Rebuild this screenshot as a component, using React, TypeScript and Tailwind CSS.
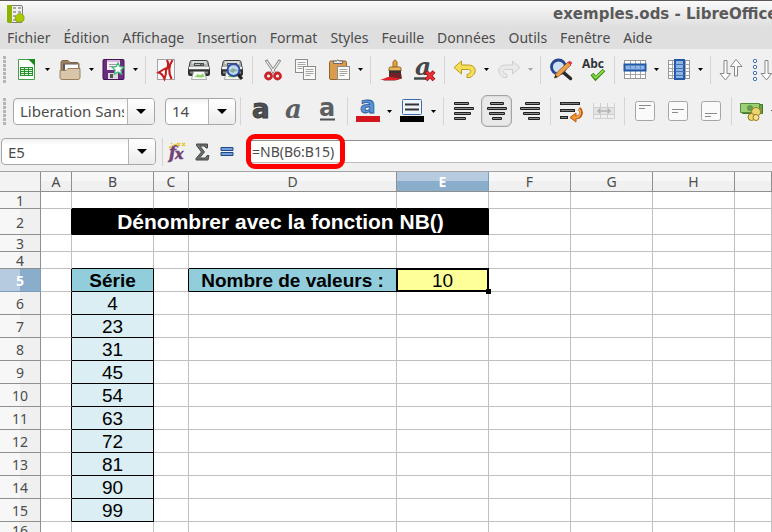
import React from "react";

type Children = { children: React.ReactNode };

function Icon({ children }: Children) {
  return (
    <svg viewBox="0 0 24 24" className="h-6 w-6 shrink-0" aria-hidden="true">
      {children}
    </svg>
  );
}

function Tool({ label, pressed = false, children }: Children & { label: string; pressed?: boolean }) {
  return (
    <button
      type="button"
      aria-label={label}
      title={label}
      aria-pressed={pressed}
      className={
        pressed
          ? "mx-px flex h-8 w-[31px] shrink-0 items-center justify-center rounded-md border border-[#a3a3a3] bg-[#e9e9e9] shadow-[inset_0_0_2px_#bbb]"
          : "flex h-8 w-[33px] shrink-0 items-center justify-center"
      }
    >
      <Icon>{children}</Icon>
    </button>
  );
}

function Drop({ label, faded = false }: { label: string; faded?: boolean }) {
  return (
    <button type="button" aria-label={label} className="flex h-8 w-[11px] shrink-0 items-center justify-center">
      <svg viewBox="0 0 5 3" className="h-[3px] w-[5px]" aria-hidden="true">
        <path d="M0 0h5L2.5 3z" fill={faded ? "#a5a5a5" : "#000"} />
      </svg>
    </button>
  );
}

function Sep() {
  return (
    <div className="flex w-2 shrink-0 justify-center">
      <div className="h-7 w-px bg-[#d4d4d4]" />
    </div>
  );
}

function Grip() {
  return (
    <div className="flex w-[9px] shrink-0 flex-col items-start gap-px pl-[3px]">
      {[0, 1, 2, 3, 4, 5, 6].map((n) => (
        <div key={n} className="h-[3px] w-[3px] bg-[#b5b5b5]" />
      ))}
    </div>
  );
}

function Combo({ label, value, className }: { label: string; value: string; className: string }) {
  return (
    <label className={"relative block h-[27px] shrink-0 " + className}>
      <span className="sr-only">{label}</span>
      <select className="block h-full w-full appearance-none overflow-hidden rounded-[4px] border border-[#a6a6a6] bg-white bg-linear-to-b from-[#f1f1f1] to-white to-25% pr-[30px] pl-[6px] text-[15px] leading-5 text-[#4c4c4c]">
        <option>{value}</option>
      </select>
      <span className="pointer-events-none absolute inset-y-px right-px flex w-[27px] items-center justify-center rounded-r-[3px] border-l border-[#b5b5b5] bg-linear-to-b from-white to-[#ececec]">
        <svg viewBox="0 0 10 5" className="h-[5px] w-[10px]" aria-hidden="true">
          <path d="M0 0h10L5 5z" fill="#000" />
        </svg>
      </span>
    </label>
  );
}

const glyph = { fontFamily: "DejaVu Serif, serif", fontWeight: 700 } as const;
const slab = { fontFamily: "DejaVu Sans, sans-serif", fontWeight: 700 } as const;

const Sheet = ({ x, y }: { x: number; y: number }) => (
  <g transform={`translate(${x} ${y})`}>
    <rect x=".5" y=".5" width="12" height="13" fill="#fafaf8" stroke="#8b8d88" />
    <path d="M2.5 3.5h8M2.5 5.5h8M2.5 7.5h8M2.5 9.5h5" stroke="#a6a8a4" />
  </g>
);

const Printer = () => (
  <g>
    <path d="M4.500 2.500h15q1 0 1.300 1l1.700 8H1.500l1.700-8q.3-1 1.300-1z" fill="#aeb1ae" stroke="#3a3d40" />
    <path d="M5 3h14l.6 3H4.400z" fill="#d9dbd8" />
    <path d="M7 5h10v3H7z" fill="#4b4e50" />
    <path d="M8 6.500h5M14.500 6.500h1" stroke="#b9bcb9" />
    <path d="M2 9h20v2.500H2z" fill="#f2f3f1" />
    <path d="M1 11.500h22v4.500q0 2-2 2H3q-2 0-2-2z" fill="#2d3134" />
    <path d="M3 14.500h3M18 14.500h3" stroke="#85898a" strokeWidth="2" />
    <path d="M6.500 13.500h11l2 8h-15z" fill="#f7f9f5" stroke="#8c8e8a" strokeWidth=".7" />
    <path d="M7.500 19l3.500-3 2 1.500 3-2 1.500 3-3 1z" fill="#8bcf6a" />
  </g>
);

const AlignLines = ({ rows }: { rows: number[][] }) => (
  <g>
    {rows.map(([x, w], i) => (
      <g key={i}>
        <rect x={x} y={3 + i * 5} width={w} height="3" rx="1" fill="#1d1f20" />
        <rect x={x + 1} y={4 + i * 5} width={w - 2} height="1" fill="#8c8c8c" />
      </g>
    ))}
  </g>
);

const VBox = ({ y }: { y: number }) => (
  <g>
    <rect x="2.500" y="2.500" width="19" height="19" rx="2" fill="#fafafa" stroke="#a5a5a5" />
    <path d={`M6 ${y}.500h12M6 ${y + 3}.500h6`} stroke="#8a8a8a" />
  </g>
);

const MenuItems = ["Fichier", "Édition", "Affichage", "Insertion", "Format", "Styles", "Feuille", "Données", "Outils", "Fenêtre", "Aide"];

function StandardBar() {
  return (
    <div className="flex h-[41px] shrink-0 items-center overflow-hidden" role="toolbar" aria-label="Standard">
      <Grip />
      <Tool label="Nouveau">
        <path d="M4.500 1.500h11l5 5v15h-16z" fill="#fff" stroke="#43a047" />
        <path d="M14 1h7v7z" fill="#188a1c" />
        <path d="M6 9h13v9H6z" fill="#26902a" />
        <path d="M7 10.500h3M11 10.500h3M15 10.500h3M7 12.500h3M11 12.500h3M15 12.500h3M7 14.500h3M11 14.500h3M15 14.500h3M7 16.500h3M11 16.500h3M15 16.500h3" stroke="#e9f7e6" />
      </Tool>
      <Drop label="Modèles" />
      <Tool label="Ouvrir">
        <path d="M3 4.500q0-2 2-2h5l2 2h7q2 0 2 2v13H3z" fill="#a08261" stroke="#806447" />
        <path d="M5 5.500h14v8H5z" fill="#5c5c58" />
        <path d="M7 6.500h13v6H7z" fill="#fff" />
        <path d="M2 12.500h6l2-2h12v9q0 2-2 2H4q-2 0-2-2z" fill="#d9c6aa" stroke="#9b7e5c" />
      </Tool>
      <Drop label="Documents récents" />
      <Tool label="Enregistrer">
        <rect x="1" y="1.500" width="21" height="20" rx="1" fill="#6a2c7c" stroke="#421352" />
        <path d="M5 2h13v10H5z" fill="#f5eef6" />
        <path d="M5 2h13v2H5z" fill="#d9b6de" />
        <path d="M7 6.500h9M7 8.500h7" stroke="#9d9d9d" />
        <path d="M6 15h10v6H6z" fill="#dadada" />
        <path d="M8 16h3v4H8z" fill="#555" />
        <path d="M16 5l1.800 3.600 4 .6-2.900 2.800.7 4-3.600-1.900-3.600 1.900.7-4-2.900-2.800 4-.6z" fill="#fff" stroke="#42b77b" strokeWidth="1.300" />
      </Tool>
      <Drop label="Options d'enregistrement" />
      <Sep />
      <Tool label="Exporter au format PDF">
        <rect x="3.500" y="1.500" width="17" height="20" fill="#f8f8f8" stroke="#a3a3a3" />
        <path d="M13 2c1.500 3 1.500 7-1 10M18.500 2c-4 6-4 13-1 19" fill="none" stroke="#c31c1f" strokeWidth="2.200" />
        <path d="M12 10L4.500 14.500q4 1 6 6.500 2-5 1.500-11" fill="none" stroke="#c31c1f" strokeWidth="2" />
      </Tool>
      <Tool label="Imprimer"><Printer /></Tool>
      <Tool label="Aperçu">
        <Printer />
        <circle cx="13.500" cy="12" r="6" fill="#b6d2f1" fillOpacity=".85" stroke="#2f4e9e" strokeWidth="2" />
        <path d="M10 13l3-3 3 2-3 3z" fill="#87a98e" />
        <path d="M18 16.500l4 4.500" stroke="#202020" strokeWidth="3" />
      </Tool>
      <Sep />
      <Tool label="Couper">
        <path d="M5 2l9.500 14M19 2L9.500 16" stroke="#858783" strokeWidth="3" />
        <path d="M5.500 3l8.500 12M18.500 3L10 15" stroke="#f5f5f3" strokeWidth="1.200" />
        <circle cx="7.500" cy="18" r="3" fill="none" stroke="#c8242b" strokeWidth="2.800" />
        <circle cx="16.500" cy="18" r="3" fill="none" stroke="#c8242b" strokeWidth="2.800" />
      </Tool>
      <Tool label="Copier">
        <Sheet x={1} y={1} />
        <Sheet x={9} y={8} />
      </Tool>
      <Tool label="Coller">
        <rect x="2.500" y="3" width="17" height="18.500" rx="1.500" fill="#d99c4c" stroke="#92652a" />
        <path d="M6.500 5.500V3h3q1-2 3 0h3v2.500z" fill="#eee" stroke="#6b6b6b" />
        <Sheet x={10} y={8} />
      </Tool>
      <Drop label="Collage spécial" />
      <Sep />
      <Tool label="Cloner le formatage">
        <path d="M14 9V4q2-4 4 0v5z" fill="#e6a240" stroke="#9e6a1c" />
        <path d="M11 9h10q1 0 1 2v2H10v-2q0-2 1-2z" fill="#e8b45c" stroke="#9a6b24" />
        <path d="M10 12.500h12v2.500H10z" fill="#333" />
        <path d="M10 15h12l1 5.500-7 2H4q5-2 6-3z" fill="#702226" />
        <path d="M1 22c5-1 5-3 10-3s6 2 11 1l-4 2z" fill="#df2029" />
      </Tool>
      <Tool label="Effacer le formatage">
        <text x="3" y="17" fontSize="25" fontStyle="italic" fill="#45484a" style={glyph}>a</text>
        <path d="M2 20.500h12" stroke="#45484a" strokeWidth="2.500" />
        <path d="M14 13.500l8 8.500M22 13.500L14 22" stroke="#a40f15" strokeWidth="4" />
        <path d="M14.500 14l7 7.500M21.500 14l-7 7.500" stroke="#ef3038" strokeWidth="2.200" />
      </Tool>
      <Sep />
      <Tool label="Annuler">
        <path d="M1 9.500L8.500 3v4H15c9 0 9.500 9 2 12.500h-3v-3c5-1.500 5-5 0-5H8.500v4.500z" fill="#f5df58" stroke="#bd981b" strokeLinejoin="round" />
      </Tool>
      <Drop label="Historique d'annulation" />
      <Tool label="Rétablir">
        <path d="M23 9.500L15.500 3v4H9C0 7-.5 16 7 19.500h3v-3c-5-1.500-5-5 0-5h5.500v4.500z" fill="#e9e9e9" stroke="#cfcfcf" strokeLinejoin="round" />
      </Tool>
      <Drop label="Historique de rétablissement" faded />
      <Sep />
      <Tool label="Rechercher et remplacer">
        <circle cx="9.500" cy="9" r="7" fill="#cfe0f2" stroke="#27458f" strokeWidth="2.800" />
        <path d="M15 15l6.500 5.500" stroke="#282828" strokeWidth="3.500" strokeLinecap="round" />
        <path d="M5.500 20l1.500-4.500L19 4l3 3L9.500 18.500z" fill="#f0a04b" stroke="#8f561e" strokeWidth=".8" />
        <path d="M18.500 4.500l1.500-1.500q3 0 3 2.500L21.500 7z" fill="#dd3944" />
        <path d="M5.500 20l1-3 2 2z" fill="#222" />
      </Tool>
      <Tool label="Orthographe">
        <text x="0" y="10" fontSize="12" fontWeight="700" fill="#2e3436" fontFamily="Open Sans, sans-serif">Abc</text>
        <path d="M10 16l3.500 4.500L22 12" fill="none" stroke="#388b0d" strokeWidth="3.800" />
        <path d="M10.500 16.500l3 3.500L21.500 12.500" fill="none" stroke="#8bdc4c" strokeWidth="1.800" />
      </Tool>
      <Sep />
      <Tool label="Ligne">
        <rect x="1.500" y="2.500" width="21" height="18" fill="#fff" stroke="#979797" />
        <path d="M2 6.500h20M2 12.500h20M2 16.500h20M7.500 3v17M12.500 3v17M17.500 3v17" stroke="#a5a5a5" />
        <rect x="1.500" y="6.500" width="21" height="6" fill="#8fb4e3" stroke="#2159a6" strokeWidth="2" />
        <path d="M7.500 7v5M12.500 7v5M17.500 7v5" stroke="#5d8ecb" />
      </Tool>
      <Drop label="Options de ligne" />
      <Tool label="Colonne">
        <rect x="1.500" y="2.500" width="21" height="18" fill="#fff" stroke="#979797" />
        <path d="M2 6.500h20M2 10.500h20M2 13.500h20M2 17.500h20M5.500 3v17M18.500 3v17" stroke="#a5a5a5" />
        <rect x="8" y="2" width="9" height="19" fill="#8fb4e3" stroke="#2159a6" strokeWidth="2" />
        <path d="M8 6.500h9M8 10.500h9M8 13.500h9M8 17.500h9" stroke="#3d72b8" />
      </Tool>
      <Drop label="Options de colonne" />
      <Sep />
      <Tool label="Trier">
        <path d="M5 2.500h3v13h3.500L6.500 22 1 15.500h4z" fill="#fcfcfc" stroke="#868886" />
        <path d="M11.500 8.500L17 1.500l6 7h-4.500V18h-3V8.500z" fill="#fcfcfc" stroke="#868886" />
      </Tool>
      <Tool label="Tri croissant">
        {[3, 9, 15, 21].map((y) => (
          <circle key={y} cx="3" cy={y} r="1.700" fill="#fff" stroke="#3d70b5" />
        ))}
        <path d="M13 2.500h3v13h3.500L14.500 22 9 15.500h4z" fill="#fcfcfc" stroke="#868886" />
      </Tool>
    </div>
  );
}

function FormatBar() {
  return (
    <div className="flex h-[42px] shrink-0 items-center overflow-hidden" role="toolbar" aria-label="Formatage">
      <Grip />
      <Combo label="Nom de police" value="Liberation Sans" className="ml-1 w-[142px]" />
      <Combo label="Taille de police" value="14" className="ml-[10px] w-[71px]" />
      <Sep />
      <Tool label="Gras">
        <text x="3" y="19" fontSize="26" fill="#4d5153" stroke="#3a3d3f" style={slab}>a</text>
      </Tool>
      <Tool label="Italique">
        <text x="3" y="19" fontSize="26" fontStyle="italic" fill="#5b5f61" style={glyph}>a</text>
      </Tool>
      <Tool label="Souligné">
        <text x="4" y="17" fontSize="24" fill="#5b5f62" style={slab}>a</text>
        <path d="M5 20.500h15" stroke="#4d5153" strokeWidth="2" />
      </Tool>
      <Sep />
      <Tool label="Couleur de police">
        <text x="4" y="14" fontSize="23" fill="#5b93d5" stroke="#28579a" strokeWidth=".8" style={slab}>a</text>
        <path d="M0 17h24v6H0z" fill="#d2151c" />
      </Tool>
      <Drop label="Choisir la couleur de police" />
      <Tool label="Couleur d'arrière-plan">
        <rect x="2.500" y=".500" width="19" height="15" rx="1" fill="#eef4fb" stroke="#3a6cab" />
        <path d="M5 5.500h14M5 10.500h14" stroke="#333" strokeWidth="2" />
        <path d="M0 17h24v6H0z" fill="#000" />
      </Tool>
      <Drop label="Choisir la couleur d'arrière-plan" />
      <Sep />
      <Tool label="Aligner à gauche">
        <AlignLines rows={[[2, 15], [2, 20], [2, 17], [2, 12]]} />
      </Tool>
      <Tool label="Centrer" pressed>
        <AlignLines rows={[[5, 14], [2, 20], [4, 16], [7, 10]]} />
      </Tool>
      <Tool label="Aligner à droite">
        <AlignLines rows={[[7, 15], [2, 20], [5, 17], [10, 12]]} />
      </Tool>
      <Sep />
      <Tool label="Renvoyer à la ligne">
        <path d="M1 4.500h20M1 11.500h15M1 18.500h8" stroke="#242626" strokeWidth="3" />
        <path d="M2 4.500h18M2 11.500h13M2 18.500h6" stroke="#7c7c7c" />
        <path d="M20 9.500c4 3 2 9-3 9h-4" fill="none" stroke="#bb5a0d" strokeWidth="3.500" />
        <path d="M11 18.500l6-4.500v9z" fill="#f5902e" stroke="#bb5a0d" />
        <path d="M20 10c3 3 1 8-3 8.500h-2" fill="none" stroke="#f7a859" strokeWidth="1.500" />
      </Tool>
      <Tool label="Fusionner et centrer les cellules">
        <path d="M1.500 4v15.500h21V4M8.500 4v4M15.500 4v4M8.500 16v4M15.500 16v4" fill="none" stroke="#cfcfcf" />
        <path d="M1.500 8.500h21v7h-21z" fill="#e3e3e3" stroke="#cfcfcf" />
        <path d="M6 12h12M8.500 9.500L6 12l2.500 2.500M15.500 9.500L18 12l-2.500 2.500" fill="none" stroke="#b4b4b4" strokeWidth="1.500" />
      </Tool>
      <Sep />
      <Tool label="Aligner en haut"><VBox y={6} /></Tool>
      <Tool label="Centrer verticalement"><VBox y={10} /></Tool>
      <Tool label="Aligner en bas"><VBox y={14} /></Tool>
      <Sep />
      <Tool label="Format monétaire">
        <path d="M2.500 5.500h20v9h-20z" fill="#67a046" stroke="#44772a" />
        <path d="M.500 4.500h19v9H.500z" fill="#9bd077" stroke="#568c38" />
        <circle cx="10" cy="9" r="3" fill="#679b4b" />
        <circle cx="16" cy="13" r="4.500" fill="#ead572" stroke="#9b7b18" />
        <circle cx="11.500" cy="18" r="3.500" fill="#ead572" stroke="#9b7b18" />
        <circle cx="16" cy="18.500" r="3" fill="#f3e392" stroke="#9b7b18" />
      </Tool>
      <Drop label="Choisir la monnaie" />
    </div>
  );
}

function FormulaBar() {
  return (
    <div className="flex h-[39px] shrink-0 items-center" role="toolbar" aria-label="Barre de formule">
      <Combo label="Zone de nom" value="E5" className="mr-[2px] ml-px w-[155px]" />
      <Sep />
      <div className="flex items-center gap-px">
        <button type="button" aria-label="Assistant Fonctions" className="w-6 shrink-0">
          <Icon>
            <text x="3" y="18" fontSize="16" fontStyle="italic" fill="#714178" stroke="#714178" strokeWidth=".6" style={glyph}>f</text>
            <text x="9" y="19" fontSize="14" fontStyle="italic" fill="#714178" stroke="#714178" strokeWidth=".6" style={glyph}>x</text>
            <path d="M3 8l2-2M7 6l2-2M11 3l3 3M14 3l-3 3M16 3l3 3M19 3l-3 3M5 3l1 1" stroke="#eac52b" strokeWidth="1.500" />
          </Icon>
        </button>
        <button type="button" aria-label="Somme" className="w-6 shrink-0">
          <Icon>
            <path d="M5.500 4h11v4h-1.500q-.5-2-2.500-2H9l4.500 6L8.500 18h5q2 0 2.500-2.500H18L17 20H5v-1.500L10.500 12l-5-6.500z" fill="#6b706e" stroke="#454947" />
          </Icon>
        </button>
        <button type="button" aria-label="Formule" className="w-6 shrink-0">
          <Icon>
            <path d="M5 7.500h12v3H5zM5 12.500h12v3H5z" fill="#729fd6" stroke="#204a87" />
          </Icon>
        </button>
      </div>
      <div className="relative ml-[9px] flex min-w-0 flex-1">
        <input
          aria-label="Ligne de saisie"
          defaultValue="=NB(B6:B15)"
          className="h-[23px] w-full border-y border-t-[#8f8f8f] border-b-[#bcbcbc] bg-white pl-[3px] text-[14px] leading-5 text-[#4c4c4c] outline-none"
        />
        <div className="pointer-events-none absolute -top-[6px] -left-[3px] h-[35px] w-[99px] rounded-[9px] border-[5px] border-[#fe0000]" />
      </div>
    </div>
  );
}

const rows = Array.from({ length: 16 }, (_, i) => i + 1);
const letters = ["A", "B", "C", "D", "E", "F", "G", "H", ""];
const serie = [4, 23, 31, 45, 54, 63, 72, 81, 90, 99];

function rowHeight(n: number) {
  if (n === 2) return "h-[26px]";
  return n < 5 || n === 16 ? "h-[17px]" : "h-[23px]";
}

function Cell({ row, col }: { row: number; col: string }) {
  const inSerie = row >= 5 && row <= 15;
  const value = col === "B" && row > 5 && inSerie ? serie[row - 6] : null;

  if (col === "E" && row === 5) {
    return (
      <td className="relative border-r border-b border-black bg-[#ffff99] pt-0.5">
        10
        <span className="pointer-events-none absolute -top-px -right-px -bottom-px -left-px border-2 border-black" />
        <span className="pointer-events-none absolute -right-[3px] -bottom-[3px] h-[5px] w-[5px] bg-black" />
      </td>
    );
  }
  if (col === "B" && row === 5) return <td className="border-r border-b border-black bg-[#92cddc] pt-0.5 font-bold">Série</td>;
  if (col === "D" && row === 5) return <td className="border-r border-b border-black bg-[#92cddc] pt-0.5 font-bold">Nombre de valeurs :</td>;
  if (value !== null) return <td className="border-r border-b border-black bg-[#daeef3] pt-0.5">{value}</td>;

  const blackRight = (col === "A" && (inSerie || row === 2)) || (col === "C" && row === 5);
  const blackBottom = (row === 4 && (col === "B" || col === "D" || col === "E")) || (row === 1 && "BCDE".includes(col) && col !== "");
  return (
    <td
      className={
        "border-r border-b p-0 " +
        (blackRight ? "border-r-black " : "border-r-[#c0c0c0] ") +
        (blackBottom ? "border-b-black" : "border-b-[#c0c0c0]")
      }
    />
  );
}

function Grid() {
  return (
    <table className="w-full table-fixed border-separate border-spacing-0 bg-white text-center text-[19px] leading-[20px] text-black">
      <colgroup>
        <col className="w-[41px]" />
        <col className="w-[31px]" />
        <col className="w-[82px]" />
        <col className="w-[35px]" />
        <col className="w-[208px]" />
        <col className="w-[92px]" />
        <col className="w-[82px]" />
        <col className="w-[82px]" />
        <col className="w-[82px]" />
        <col />
      </colgroup>
      <thead className="font-['Noto_Sans','Open_Sans',sans-serif] text-[14px] text-[#4c4c4c]">
        <tr className="h-[20px]">
          <td className="border-r border-b border-[#8f8f8f] bg-[#f3f3f3] p-0" />
          {letters.map((l, i) => (
            <th
              key={i}
              scope="col"
              className={
                l === "E"
                  ? "border-r border-b border-r-[#7c9cbb] border-b-[#8f8f8f] bg-[linear-gradient(#b6cbe0_50%,#8badcc_50%)] p-0 leading-[18px] font-bold text-white"
                  : "border-r border-b border-[#8f8f8f] bg-[linear-gradient(#f7f7f7_50%,#f0f0f0_50%)] p-0 leading-[18px] font-normal"
              }
            >
              {l}
            </th>
          ))}
        </tr>
      </thead>
      <tbody>
        {rows.map((n) => (
          <tr key={n} className={rowHeight(n)}>
            <th
              scope="row"
              className={
                "border-r border-b px-0 pt-0.5 pb-0 font-['Noto_Sans','Open_Sans',sans-serif] text-[14px] leading-[14px] " +
                (n === 5
                  ? "border-[#7c9cbb] bg-[linear-gradient(90deg,#b6cbe0_50%,#8badcc_50%)] font-bold text-white"
                  : "border-[#8f8f8f] bg-[linear-gradient(90deg,#f7f7f7_50%,#f0f0f0_50%)] font-normal text-[#4c4c4c]")
              }
            >
              {n}
            </th>
            {n === 2 ? (
              <>
                <Cell row={n} col="A" />
                <td colSpan={4} className="bg-black p-0 text-[21px] leading-6 font-bold text-white">
                  Dénombrer avec la fonction NB()
                </td>
                {["F", "G", "H", ""].map((c) => (
                  <Cell key={c} row={n} col={c} />
                ))}
              </>
            ) : (
              letters.map((c) => <Cell key={c} row={n} col={c} />)
            )}
          </tr>
        ))}
      </tbody>
    </table>
  );
}

export default function App() {
  return (
    <div className="flex h-screen w-full flex-col overflow-hidden bg-[#f0f0f0] font-['Noto_Sans','Open_Sans',sans-serif] text-[#4c4c4c]">
      <header className="flex h-[26px] shrink-0 items-center justify-between overflow-hidden border-t border-[#5c5858] bg-linear-to-b from-[#fafafa] to-[#e0e0e0] pl-[3px]">
        <Icon>
          <rect x="4.500" y="3.500" width="15" height="17" rx="1.500" fill="#f0f0ee" stroke="#7d7d7d" />
          <path d="M4 3h5v18H6q-2 0-2-2z" fill="#8db300" />
          <path d="M10 6h3M15 6h3M10 10h3M15 10h3M10 14h3M10 18h4" stroke="#a9a9a5" strokeWidth="2" />
          <path d="M12 15q4-6 8-2l1 1v4q-4 4-8 1z" fill="#a9cc00" stroke="#7c9c00" strokeWidth=".7" />
        </Icon>
        <h1 className="w-[219px] shrink-0 overflow-hidden font-['DejaVu_Sans',sans-serif] text-[15px] leading-5 font-bold whitespace-nowrap text-[#5a5a5a]">
          exemples.ods - LibreOffice
        </h1>
      </header>
      <nav className="flex h-[23px] shrink-0 items-center gap-[13px] bg-[#dfdfdf] pl-[7px] text-[14px] leading-5" aria-label="Menu principal">
        {MenuItems.map((m) => (
          <button key={m} type="button">
            {m}
          </button>
        ))}
      </nav>
      <StandardBar />
      <FormatBar />
      <FormulaBar />
      <main className="min-h-0 flex-1 overflow-hidden border-t border-[#a3a3a3] font-['Liberation_Sans',Arial,sans-serif]">
        <Grid />
      </main>
    </div>
  );
}
